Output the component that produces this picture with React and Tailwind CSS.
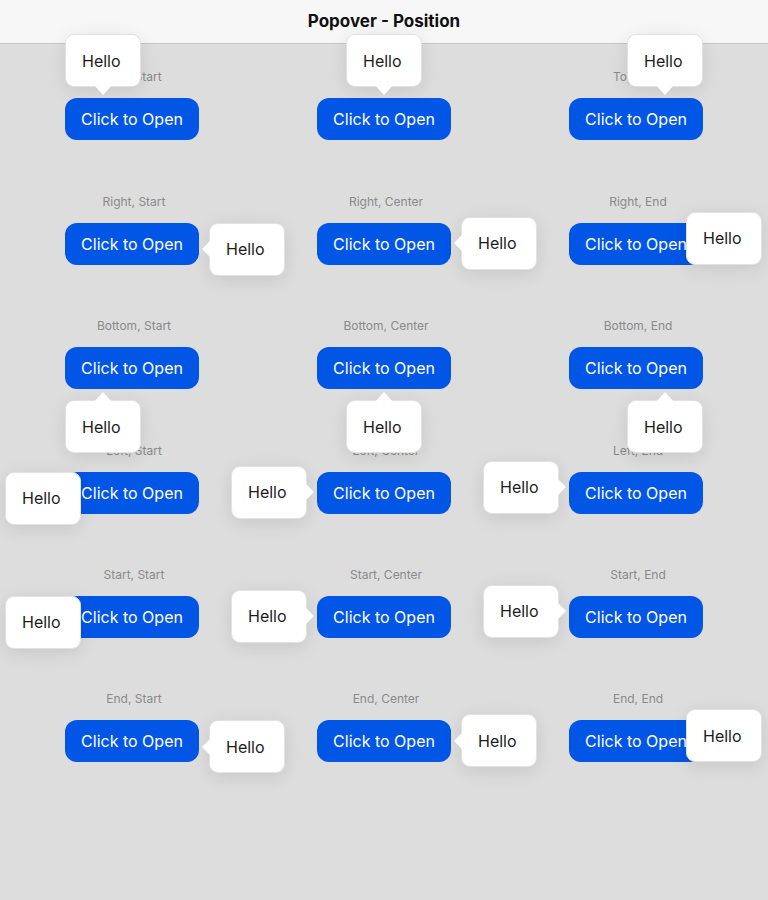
import React from "react";

const rows = [
  { name: "Top", place: "top" },
  { name: "Right", place: "right" },
  { name: "Bottom", place: "bottom" },
  { name: "Left", place: "left" },
  { name: "Start", place: "left" },
  { name: "End", place: "right" },
];
const aligns = ["Start", "Center", "End"];

const boxPos = {
  "top-0": "left-0 bottom-[53px]",
  "top-1": "left-[29px] bottom-[53px]",
  "top-2": "right-0 bottom-[53px]",
  "bottom-0": "left-0 top-[53px]",
  "bottom-1": "left-[29px] top-[53px]",
  "bottom-2": "right-0 top-[53px]",
  "right-0": "left-[144px] top-0",
  "right-1": "left-[144px] top-[-6px]",
  "right-2": "left-[117px] bottom-0",
  "left-0": "left-[-60px] top-0",
  "left-1": "right-[144px] top-[-6px]",
  "left-2": "right-[144px] bottom-0",
};

function Arrow({ place }) {
  if (place === "top")
    return (
      <svg width="18" height="10" viewBox="0 0 18 10" className="absolute left-1/2 -translate-x-1/2 top-[calc(100%-1px)]">
        <polygon points="0,0 18,0 9,10" fill="#ffffff" />
      </svg>
    );
  if (place === "bottom")
    return (
      <svg width="18" height="10" viewBox="0 0 18 10" className="absolute left-1/2 -translate-x-1/2 bottom-[calc(100%-1px)]">
        <polygon points="0,10 18,10 9,0" fill="#ffffff" />
      </svg>
    );
  if (place === "right")
    return (
      <svg width="9" height="18" viewBox="0 0 9 18" className="absolute top-1/2 -translate-y-1/2 right-[calc(100%-1px)]">
        <polygon points="9,0 9,18 0,9" fill="#ffffff" />
      </svg>
    );
  return (
    <svg width="9" height="18" viewBox="0 0 9 18" className="absolute top-1/2 -translate-y-1/2 left-[calc(100%-1px)]">
      <polygon points="0,0 0,18 9,9" fill="#ffffff" />
    </svg>
  );
}

function Cell({ row, ai }) {
  const key = `${row.place}-${ai}`;
  const clamped = (row.place === "right" && ai === 2) || (row.place === "left" && ai === 0);
  return (
    <div className="flex flex-col items-center h-[124.4px]">
      <div className="text-[12px] leading-[16px] text-[#8a8a8a] pl-1">
        {row.name}, {aligns[ai]}
      </div>
      <div className="relative mt-[13px] w-[134px] h-[42px]">
        <button className="w-[134px] h-[42px] rounded-[12px] bg-[#0256e6] text-white text-[16px] leading-[42px] text-center">
          Click to Open
        </button>
        <div
          className={`absolute z-10 w-[76px] h-[53px] bg-white rounded-[9px] border border-[#e2e2e2] shadow-[0_4px_18px_rgba(0,0,0,0.10)] flex items-center justify-start pl-[16px] text-[16px] text-[#1c1c1c] ${boxPos[key]}`}
        >
          Hello
          {!clamped && <Arrow place={row.place} />}
        </div>
      </div>
    </div>
  );
}

export default function App() {
  return (
    <div className="w-[768px] h-[900px] bg-[#dddddd] overflow-hidden font-['Inter',sans-serif]">
      <div className="h-[44px] pt-px bg-[#f7f7f7] border-b border-[#c6c6c6] flex items-center justify-center">
        <span className="text-[17px] font-bold text-[#111111]">Popover - Position</span>
      </div>
      <div className="pt-[25.4px] pl-[6px] grid grid-cols-[252px_252px_252px]">
        {rows.map((row) =>
          [0, 1, 2].map((ai) => <Cell key={row.name + ai} row={row} ai={ai} />)
        )}
      </div>
    </div>
  );
}
